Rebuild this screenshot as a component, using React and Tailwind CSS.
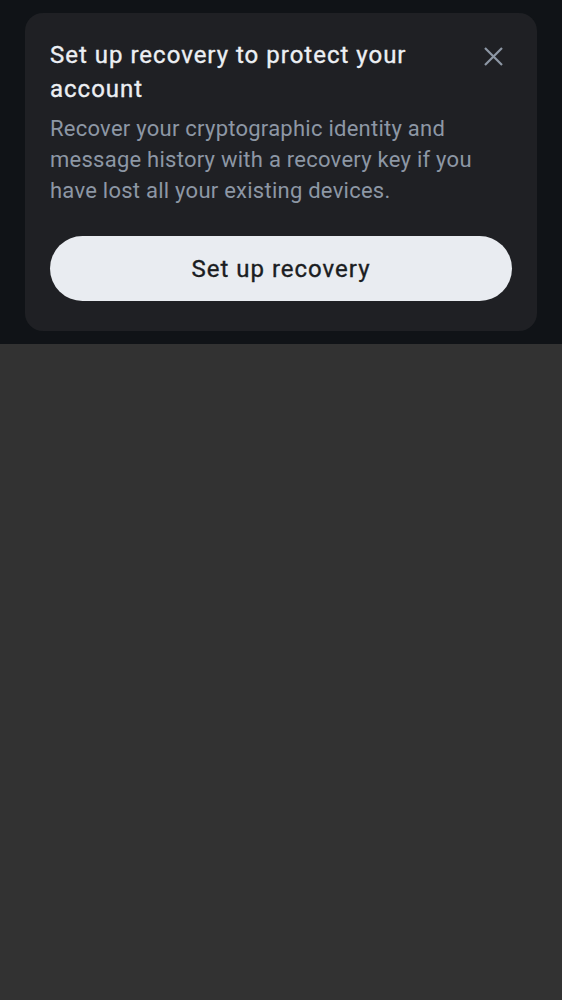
import React from 'react';

export default function App() {
  return (
    <div className="min-h-[1000px] bg-[#323232] font-['Roboto',sans-serif]">
      <div className="bg-[#101317] px-[25px] pt-[13px] pb-[13px]">
        <div className="rounded-[18px] bg-[#1f2024] px-[25px] pt-[25px] pb-[30px]">
          <div className="flex items-start justify-between">
            <h2 className="pr-[40px] text-[24px] font-normal leading-[34px] tracking-[1px] text-[#eceff3] [-webkit-text-stroke:0.35px_#eceff3]">
              Set up recovery to protect your account
            </h2>
            <button className="mt-[9px] mr-[9px] shrink-0 text-[#8d97a5]">
              <svg width="19" height="19" viewBox="0 0 19 19" fill="none" stroke="currentColor" strokeWidth="2.2">
                <path d="M1 1L18 18M18 1L1 18" />
              </svg>
            </button>
          </div>
          <p className="mt-[7px] text-[22px] leading-[31px] tracking-[0.25px] text-[#8d97a5]">
            Recover your cryptographic identity and message history with a recovery key if you have lost all your existing devices.
          </p>
          <button className="mt-[30px] h-[65px] w-full rounded-full bg-[#e9ecf1] text-[24px] font-normal tracking-[1px] text-[#1b1d22] [-webkit-text-stroke:0.35px_#1b1d22]">
            Set up recovery
          </button>
        </div>
      </div>
    </div>
  );
}
